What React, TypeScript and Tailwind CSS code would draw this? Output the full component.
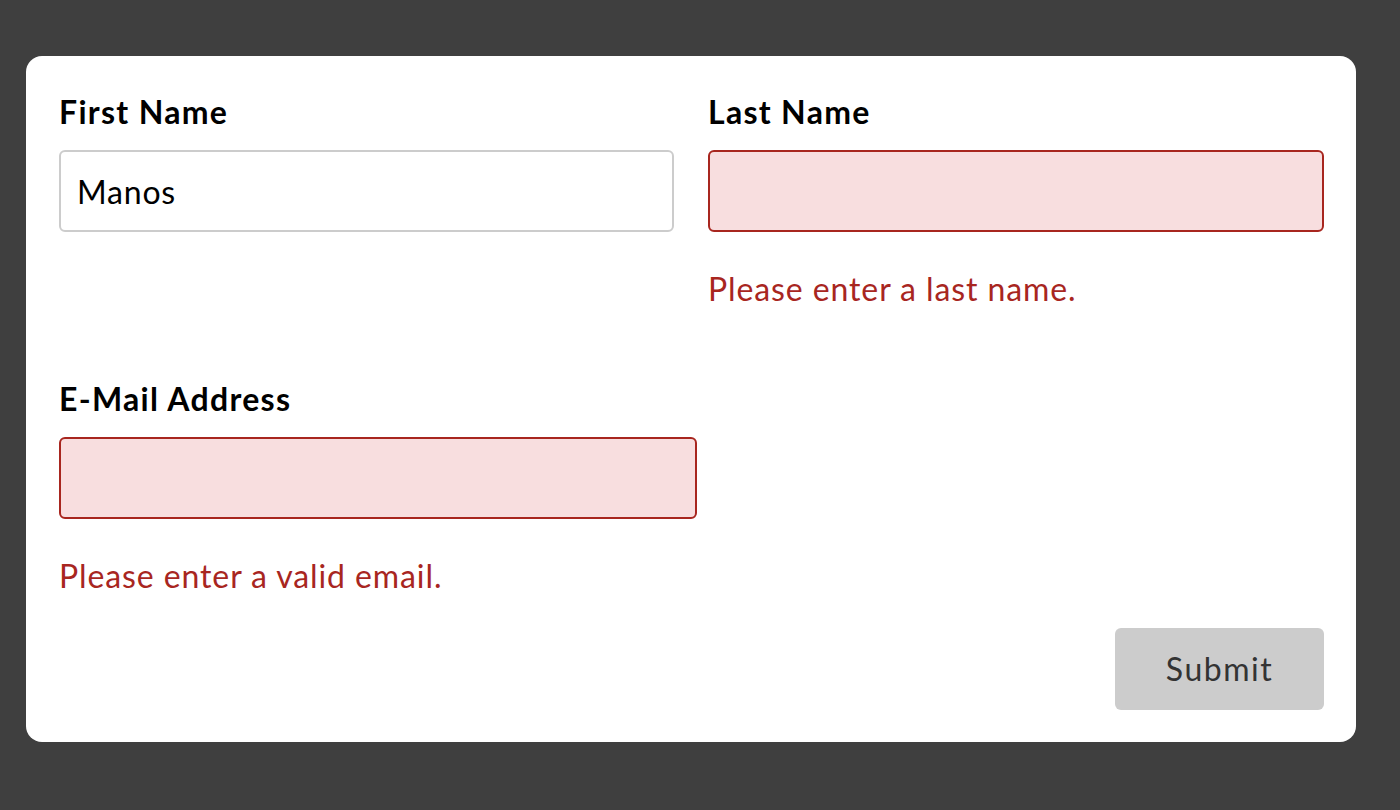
import React from "react";

export default function App() {
  const font = { fontFamily: "Lato, 'Noto Sans', sans-serif" };
  return (
    <div className="min-h-[810px] w-full bg-[#3f3f3f] pl-[26px] pt-[56px]" style={font}>
      <form className="flex w-[1330px] flex-col rounded-[16px] bg-white pb-8 pl-[33px] pr-[32px] pt-8">
        <div className="grid grid-cols-[615px_616px] gap-x-[34px]">
          <div className="flex flex-col">
            <label className="text-[32px] font-bold leading-[48px] tracking-[1.3px] text-black">First Name</label>
            <input
              defaultValue="Manos"
              className="mt-[14px] h-[82px] w-full rounded-[6px] border-2 border-[#cccccc] bg-white px-4 text-[32px] tracking-[0.8px] text-black outline-none"
            />
          </div>
          <div className="flex flex-col">
            <label className="text-[32px] font-bold leading-[48px] tracking-[1.3px] text-black">Last Name</label>
            <input className="mt-[14px] h-[82px] w-full rounded-[6px] border-2 border-[#a8261f] bg-[#f8dedf] px-4 text-[32px] outline-none" />
            <p className="mt-[33px] text-[32px] leading-[48px] tracking-[0.9px] text-[#a8261f]">Please enter a last name.</p>
          </div>
        </div>
        <div className="mt-[62px] flex w-[638px] flex-col">
          <label className="text-[32px] font-bold leading-[48px] tracking-[1.3px] text-black">E-Mail Address</label>
          <input className="mt-[14px] h-[82px] w-full rounded-[6px] border-2 border-[#a8261f] bg-[#f8dedf] px-4 text-[32px] outline-none" />
          <p className="mt-[33px] text-[32px] leading-[48px] tracking-[0.9px] text-[#a8261f]">Please enter a valid email.</p>
        </div>
        <div className="mt-[28px] flex justify-end">
          <button
            type="button"
            className="h-[82px] w-[209px] rounded-[6px] bg-[#cccccc] text-[32px] tracking-[1.5px] text-[#333333]"
          >
            Submit
          </button>
        </div>
      </form>
    </div>
  );
}
